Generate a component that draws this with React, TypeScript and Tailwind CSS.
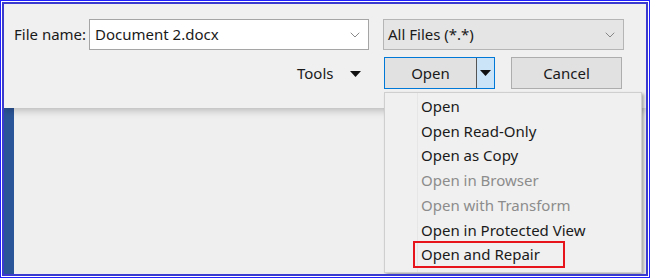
import { ChevronDown } from "lucide-react"

const items = [
  { label: "Open", off: false },
  { label: "Open Read-Only", off: false },
  { label: "Open as Copy", off: false },
  { label: "Open in Browser", off: true },
  { label: "Open with Transform", off: true },
  { label: "Open in Protected View", off: false },
  { label: "Open and Repair", off: false, marked: true },
]

function Caret() {
  return (
    <svg width="11" height="6" viewBox="0 0 11 6" aria-hidden>
      <path d="M0 0h11L5.5 6z" fill="#111" />
    </svg>
  )
}

export default function App() {
  return (
    <div className="w-[650px] h-[278px] border border-[#2020ff] p-px bg-white font-['Noto_Sans',sans-serif] text-[15px] text-[#1a1a1a]">
      <div className="relative h-full border-2 border-[#3a3ad0] bg-[#efefef] flex flex-col overflow-hidden">
        {/* dialog footer */}
        <div className="h-[104px] bg-[#f0f0f0] shadow-[0_2px_8px_rgba(0,0,0,0.25)] z-10 pt-[15px]">
          <div className="flex items-center h-[31px]">
            <span className="ml-[10px] w-[75px]">File name:</span>
            <div className="w-[280px] h-[31px] bg-white border border-[#a5a5a5] flex items-center justify-between pl-[5px] pr-[5px]">
              <span>Document 2.docx</span>
              <ChevronDown className="w-4 h-4 text-[#777]" strokeWidth={1.3} />
            </div>
            <div className="ml-[14px] w-[241px] h-[31px] bg-[#e5e5e5] border border-[#b5b5b5] flex items-center justify-between pl-[4px] pr-[5px]">
              <span>All Files (*.*)</span>
              <ChevronDown className="w-4 h-4 text-[#777]" strokeWidth={1.3} />
            </div>
          </div>
          <div className="flex items-center h-[32px] mt-[7px]">
            <div className="ml-[293px] w-[87px] flex items-center">
              <span>Tools</span>
              <span className="ml-[16px] mt-px"><Caret /></span>
            </div>
            <div className="w-[111px] h-[32px] border border-[#0078d7] bg-[#e1e1e1] flex">
              <span className="flex-1 flex items-center justify-center">Open</span>
              <span className="w-[18px] border-l border-[#555] bg-[#cce4f7] flex items-center justify-center"><Caret /></span>
            </div>
            <div className="ml-[16px] w-[111px] h-[32px] border border-[#adadad] bg-[#e1e1e1] flex items-center justify-center">Cancel</div>
          </div>
        </div>

        {/* document behind */}
        <div className="flex-1 flex">
          <div className="w-[10px] bg-[#2a5598]" />
        </div>

        {/* split button menu */}
        <div className="absolute left-[380px] top-[88px] w-[258px] h-[181px] bg-[#f0f0f0] border border-[#cfcfcf] shadow-[2px_2px_3px_rgba(0,0,0,0.3)] z-20 pt-px">
          <div className="absolute left-[32px] top-0 bottom-0 w-px bg-[#e6e6e6]" />
          {items.map((it) => (
            <div key={it.label} className="relative h-[24.7px] flex items-center pl-[36px]">
              <span
                className={
                  (it.off ? "text-[#8c8c8c] " : "text-[#1a1a1a] ") +
                  (it.marked ? "border-2 border-[#e8141c] -ml-[8px] pl-[6px] pr-[23px] h-[27px] flex items-center" : "")
                }
              >
                {it.label}
              </span>
            </div>
          ))}
        </div>
      </div>
    </div>
  )
}
